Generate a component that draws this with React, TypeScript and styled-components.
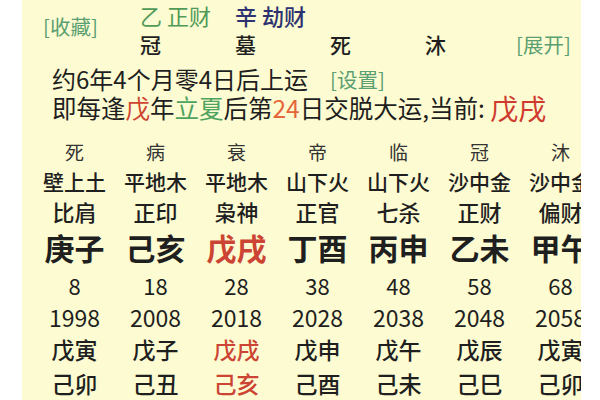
import React from "react";
import styled, { createGlobalStyle } from "styled-components";

const Global = createGlobalStyle`
  html, body { margin: 0; padding: 0; background: #ffffff; }
  body { font-family: "Noto Sans CJK SC", "Noto Sans", sans-serif; color: #1f1f1f; }
`;

const Page = styled.div`
  width: 600px;
  height: 400px;
  display: flex;
  background: #ffffff;
`;

const Panel = styled.div`
  margin-left: 22px;
  width: 559px;
  height: 400px;
  background: #fdfbd1;
  overflow: hidden;
  display: flex;
  flex-direction: column;
`;

const Header = styled.div`
  height: 64px;
  padding-top: 2px;
  box-sizing: border-box;
  display: grid;
  grid-template-columns: 118px repeat(4, 95px) 1fr;
  grid-template-rows: 26px 32px;
`;

const Link = styled.span`
  color: #5a9f72;
  font-size: 20.5px;
  font-weight: 400;
  white-space: nowrap;
`;

const Fav = styled.div`
  grid-column: 1;
  grid-row: 1 / span 2;
  padding-left: 21px;
  padding-top: 10px;
  line-height: 28px;
`;

const Expand = styled.div`
  grid-column: 6;
  grid-row: 2;
  margin-left: -4px;
  line-height: 32px;
`;

const God = styled.div<{ $col: number; $tone: "green" | "navy" }>`
  grid-column: ${(p) => p.$col};
  grid-row: 1;
  font-size: 22px;
  line-height: 26px;
  white-space: nowrap;
  color: ${(p) => (p.$tone === "green" ? "#4f9a57" : "#2d3370")};
  font-weight: ${(p) => (p.$tone === "green" ? 400 : 500)};
`;

const Stage = styled.div<{ $col: number }>`
  grid-column: ${(p) => p.$col};
  grid-row: 2;
  font-size: 21px;
  line-height: 32px;
  font-weight: 500;
  color: #1f1f1f;
`;

const Line = styled.div<{ $h: number; $size: number }>`
  height: ${(p) => p.$h}px;
  line-height: 1.1;
  padding-left: 30px;
  font-size: ${(p) => p.$size}px;
  white-space: nowrap;
  display: flex;
  align-items: center;
`;

const Setting = styled(Link)`
  margin-left: 22px;
`;

const Hl = styled.span<{ $c: string; $size?: number }>`
  color: ${(p) => p.$c};
  ${(p) => (p.$size ? `font-size: ${p.$size}px;` : "")}
`;

const Table = styled.div`
  margin-top: 16px;
  padding-left: 12px;
  display: flex;
  flex-direction: column;
`;

const Row = styled.div<{ $h: number; $size: number; $weight: number; $color?: string }>`
  display: grid;
  grid-template-columns: repeat(7, 81px);
  height: ${(p) => p.$h}px;
  line-height: ${(p) => p.$h}px;
  font-size: ${(p) => p.$size}px;
  font-weight: ${(p) => p.$weight};
  color: ${(p) => p.$color ?? "#1f1f1f"};
`;

const Cell = styled.div<{ $red?: boolean }>`
  text-align: center;
  white-space: nowrap;
  color: ${(p) => (p.$red ? "#cc4433" : "inherit")};
`;

type RowSpec = { h: number; size: number; weight: number; color?: string; cells: string[]; red?: number[] };

const rows: RowSpec[] = [
  { h: 28, size: 19, weight: 400, color: "#333", cells: ["死", "病", "衰", "帝", "临", "冠", "沐"] },
  { h: 30, size: 21, weight: 500, cells: ["壁上土", "平地木", "平地木", "山下火", "山下火", "沙中金", "沙中金"] },
  { h: 30, size: 22, weight: 500, cells: ["比肩", "正印", "枭神", "正官", "七杀", "正财", "偏财"] },
  { h: 42, size: 30, weight: 700, cells: ["庚子", "己亥", "戊戌", "丁酉", "丙申", "乙未", "甲午"], red: [2] },
  { h: 34, size: 22, weight: 400, cells: ["8", "18", "28", "38", "48", "58", "68"] },
  { h: 30, size: 23, weight: 400, cells: ["1998", "2008", "2018", "2028", "2038", "2048", "2058"] },
  { h: 34, size: 23, weight: 500, cells: ["戊寅", "戊子", "戊戌", "戊申", "戊午", "戊辰", "戊寅"], red: [2] },
  { h: 34, size: 23, weight: 500, cells: ["己卯", "己丑", "己亥", "己酉", "己未", "己巳", "己卯"], red: [2] },
];

export default function App() {
  return (
    <Page>
      <Global />
      <Panel>
        <Header>
          <Fav>
            <Link>[收藏]</Link>
          </Fav>
          <God $col={2} $tone="green">乙 正财</God>
          <God $col={3} $tone="navy">辛 劫财</God>
          <Stage $col={2}>冠</Stage>
          <Stage $col={3}>墓</Stage>
          <Stage $col={4}>死</Stage>
          <Stage $col={5}>沐</Stage>
          <Expand>
            <Link>[展开]</Link>
          </Expand>
        </Header>
        <Line $h={30} $size={24}>
          约6年4个月零4日后上运
          <Setting>[设置]</Setting>
        </Line>
        <Line $h={28} $size={24.5}>
          即每逢<Hl $c="#cf4632">戊</Hl>年<Hl $c="#4ea35f">立夏</Hl>后第<Hl $c="#e4673c">24</Hl>日交脱大运,当前:&nbsp;
          <Hl $c="#cf3b2e" $size={28}>戊戌</Hl>
        </Line>
        <Table>
          {rows.map((r, i) => (
            <Row key={i} $h={r.h} $size={r.size} $weight={r.weight} $color={r.color}>
              {r.cells.map((c, j) => (
                <Cell key={j} $red={r.red?.includes(j)}>
                  {c}
                </Cell>
              ))}
            </Row>
          ))}
        </Table>
      </Panel>
    </Page>
  );
}
